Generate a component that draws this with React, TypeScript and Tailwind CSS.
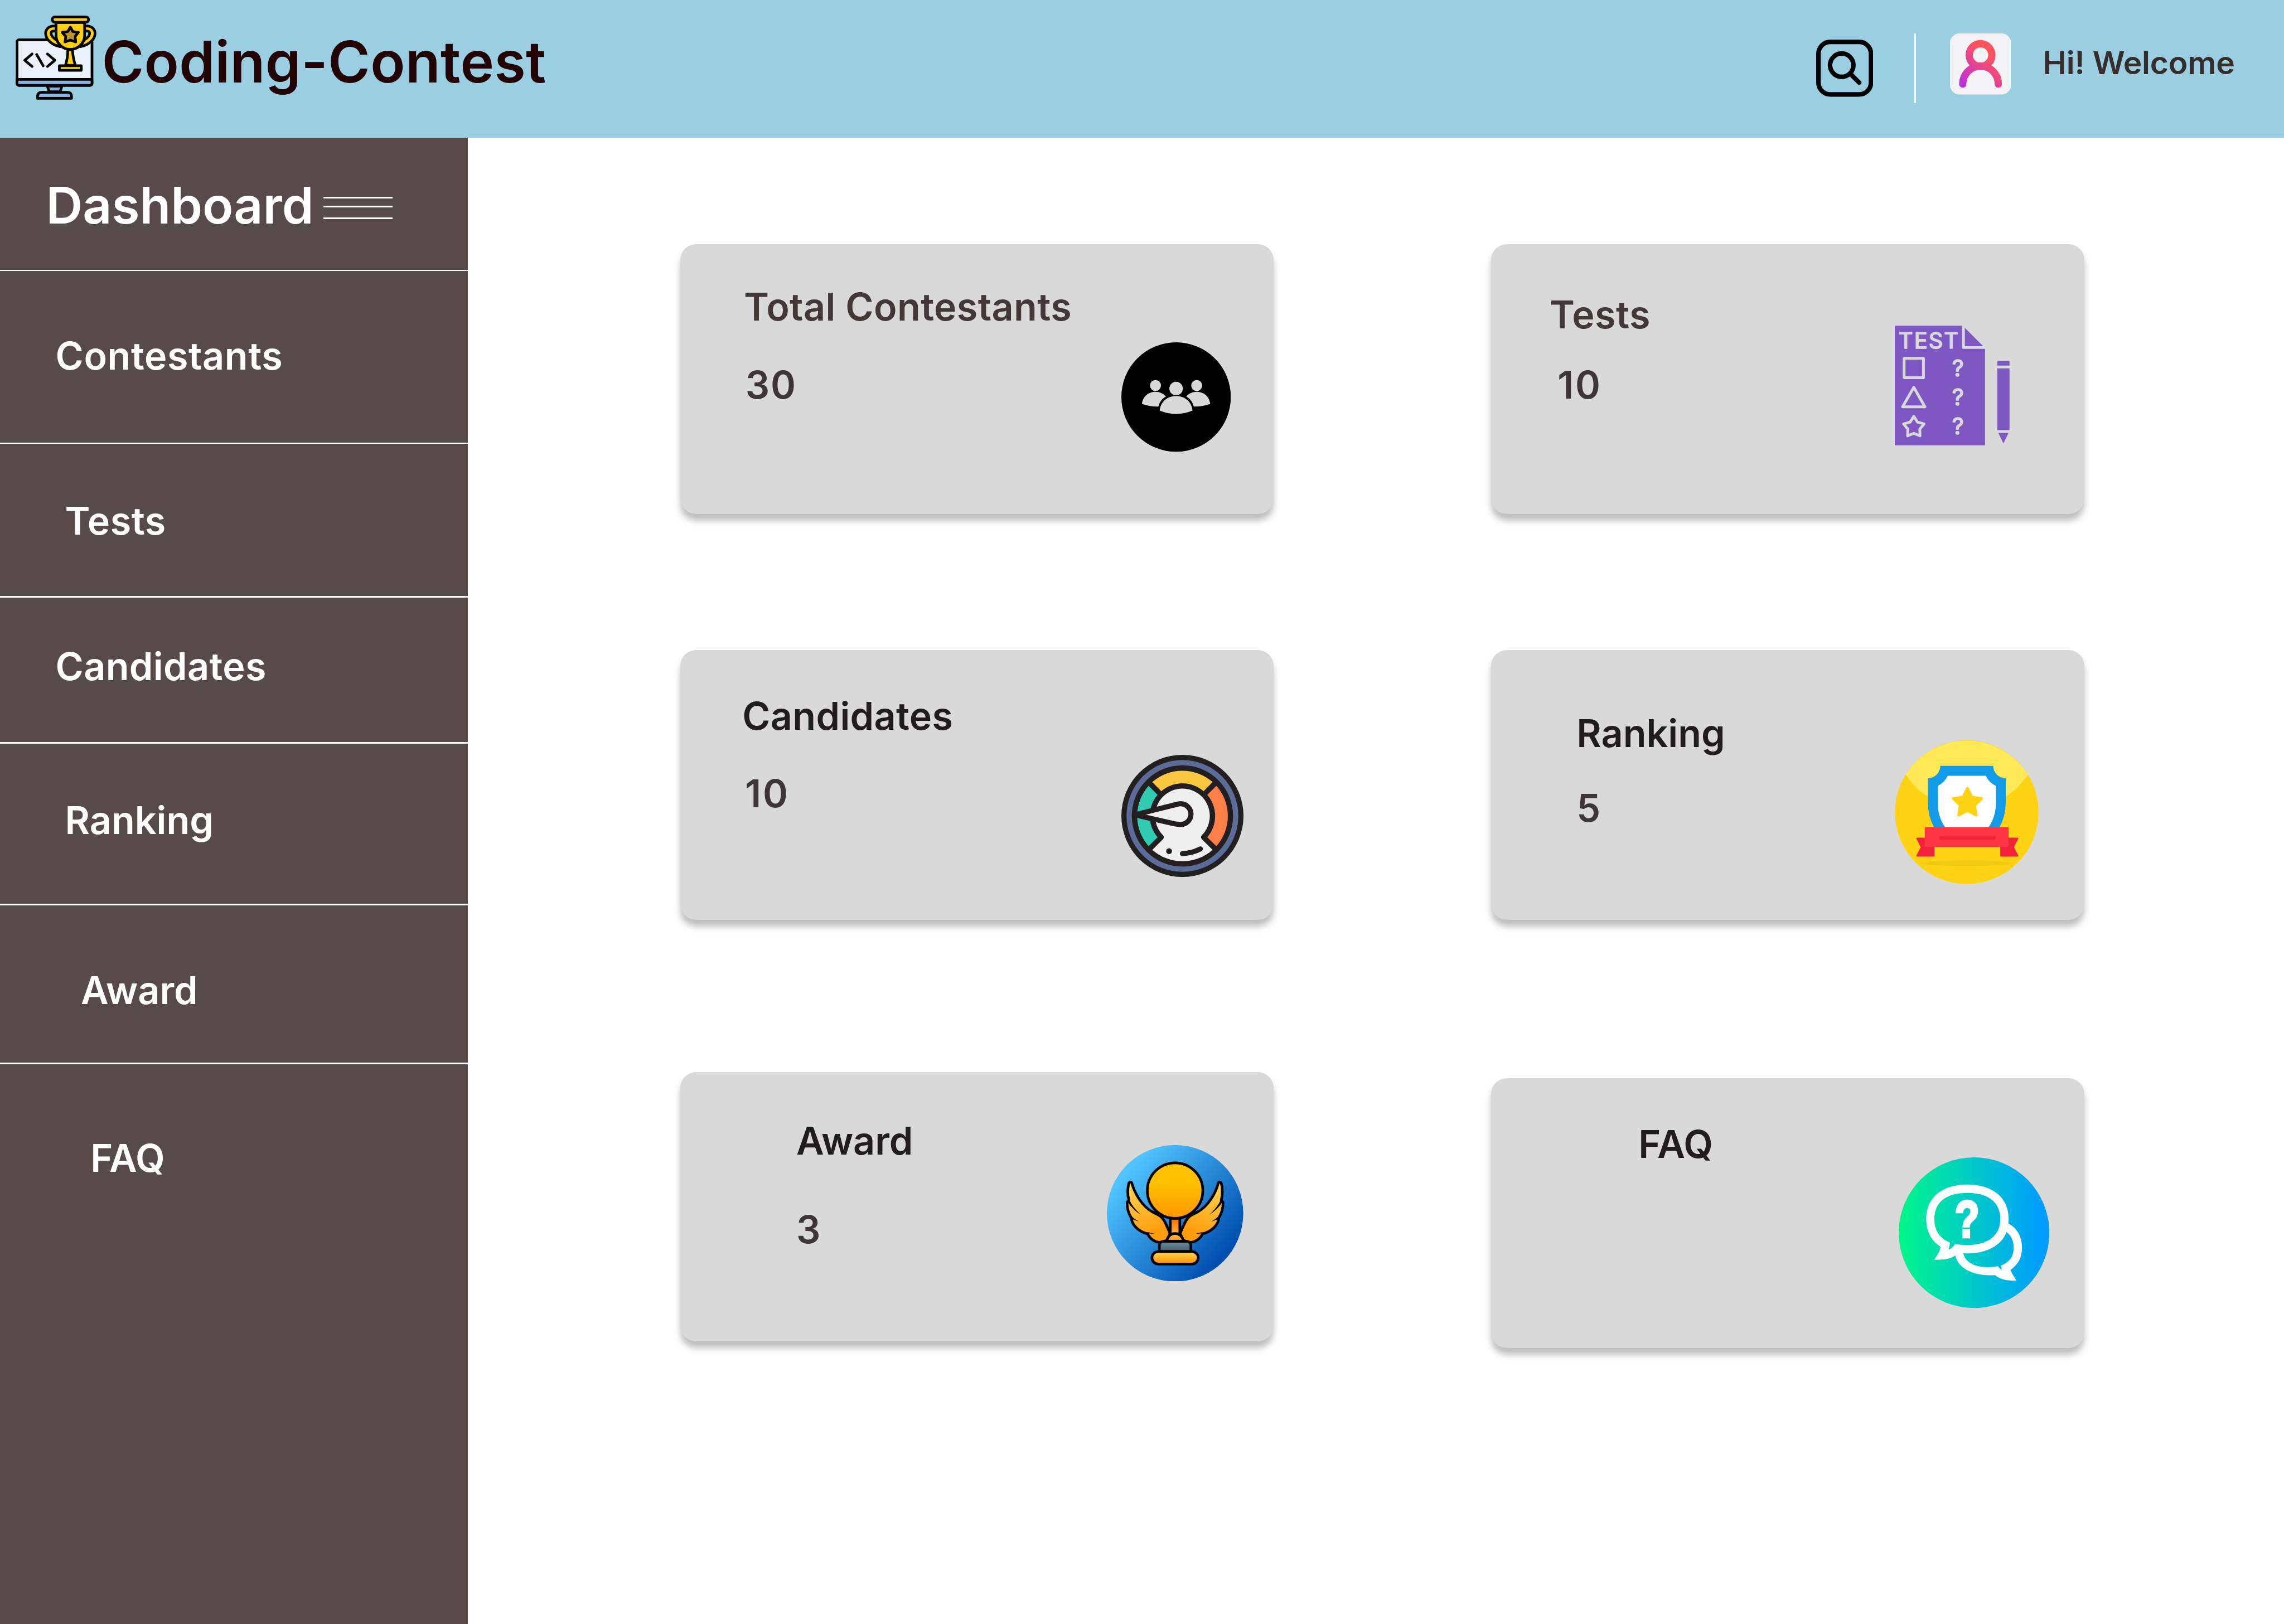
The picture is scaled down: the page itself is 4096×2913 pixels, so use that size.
import type { ReactNode } from "react";

function LogoIcon() {
  return (
    <svg viewBox="60 60 612 636" className="h-53 w-51 shrink-0" stroke="#000" strokeWidth="20" strokeLinejoin="round" strokeLinecap="round" fill="none">
      <path d="M300 594 L314 636 H397 L410 594Z" fill="#8ab0df" />
      <path d="M226 686V672Q226 641 257 641H453Q483 641 483 672V686Z" fill="#8ab0df" />
      <rect x="71" y="243" width="567" height="345" rx="15" fill="#eaf1fb" />
      <path d="M71 543H638V573Q638 588 623 588H86Q71 588 71 573Z" fill="#8ab0df" />
      <path d="M185 350 129 398 185 445M219 354 269 440M301 350 357 398 301 445" />
      <path d="M366 139H352C308 139 287 165 287 195C287 240 335 284 397 295L372 246C343 228 328 208 328 195C328 184 335 177 350 177H366Z" fill="#ffcf08" />
      <path d="M582 139H596C640 139 661 165 661 195C661 240 613 284 551 295L576 246C605 228 620 208 620 195C620 184 613 177 598 177H582Z" fill="#ffcf08" />
      <path d="M455 318C455 360 450 396 437 436H512C499 396 492 360 490 318Z" fill="#ffcf08" />
      <rect x="391" y="439" width="166" height="35" rx="2" fill="#ffcf08" />
      <path d="M366 112V210C366 268 415 316 474 316C533 316 582 268 582 210V112Z" fill="#ffcf08" />
      <rect x="337" y="70" width="275" height="40" rx="20" fill="#ffcf08" />
      <path d="M474 147 493 181 535 187 510 218 515 259 474 245 434 259 439 218 413 187 455 181Z" fill="#bd9730" />
    </svg>
  );
}

function SearchIcon() {
  return (
    <svg viewBox="0 0 144 144" className="h-36 w-36 shrink-0" fill="none" stroke="#000" strokeWidth="11.5" strokeLinecap="round">
      <rect x="5.75" y="5.75" width="132.5" height="132.5" rx="30" />
      <circle cx="64.5" cy="64.5" r="29.5" />
      <path d="M87 87 108.5 108.5" />
    </svg>
  );
}

function AvatarIcon() {
  return (
    <svg viewBox="0 0 154 154" className="h-38.5 w-38.5 shrink-0">
      <defs>
        <linearGradient id="avatar" gradientUnits="userSpaceOnUse" x1="96" y1="50" x2="30" y2="128">
          <stop offset="0" stopColor="#ff535c" />
          <stop offset="1" stopColor="#bd30dc" />
        </linearGradient>
      </defs>
      <rect width="154" height="154" rx="24" fill="#f3f3f6" />
      <g fill="none" stroke="url(#avatar)" strokeWidth="18.4" strokeLinecap="round">
        <circle cx="77" cy="54.5" r="28.6" />
        <path d="M32.2 127.7A44.8 45.6 0 0 1 121.8 127.7" />
      </g>
    </svg>
  );
}

function PeopleIcon() {
  return (
    <svg viewBox="144 132 828 828" className="h-69 w-69">
      <circle cx="558" cy="546" r="414" />
      <g fill="#d9d9d9">
        <circle cx="402" cy="459" r="41.5" />
        <circle cx="714" cy="459" r="41.5" />
        <circle cx="558" cy="482" r="51" />
        <path d="M300 598C304 545 347 506 402 506C433 506 461 518 481 542C452 558 432 585 424 618C378 619 338 612 300 598Z" />
        <path d="M816 598C812 545 769 506 714 506C683 506 655 518 635 542C664 558 684 585 692 618C738 619 778 612 816 598Z" />
        <path d="M434 649C438 585 492 538 558 538C624 538 678 585 682 649C605 682 511 682 434 649Z" />
      </g>
    </svg>
  );
}

function TestIcon() {
  return (
    <svg viewBox="178 123 870 905" className="h-75.5 w-72.5">
      <path d="M178 124H687V288Q687 299 698 299H861V1028H178ZM708 139 847 279H708Z" fill="#7e57c2" />
      <path d="M954 425V400Q954 388 966 388H1034Q1046 388 1046 400V425ZM954 446H1046V914H954ZM961 935H1039L1000 1014Z" fill="#7e57c2" />
      <g fill="#d9d9d9" stroke="#d9d9d9" strokeWidth="7" strokeLinejoin="round" fontFamily="Inter, sans-serif">
        <text x="207" y="296" fontSize="168" textLength="452">TEST</text>
        <text x="655" y="507" fontSize="172" textAnchor="middle">?</text>
        <text x="655" y="727" fontSize="172" textAnchor="middle">?</text>
        <text x="655" y="947" fontSize="172" textAnchor="middle">?</text>
      </g>
      <g fill="none" stroke="#d9d9d9" strokeWidth="21" strokeLinejoin="round">
        <path d="M248.500 370.500H395V517H248.500ZM322 590 406 737H237ZM322 810 350 853 399 867 367 906 369 957 322 938 275 957 277 906 245 867 294 853Z" />
      </g>
    </svg>
  );
}

function GaugeIcon() {
  return (
    <svg viewBox="144 132 924 924" className="h-77 w-77">
      <circle cx="606" cy="594" r="462" fill="#231f20" />
      <circle cx="606" cy="594" r="403" fill="none" stroke="#5c6c98" strokeWidth="40" />
      <path d="M378 338A345 345 0 0 1 834 338L766 407A245 245 0 0 0 446 407Z" fill="#fcc740" />
      <path d="M350 366A345 345 0 0 0 350 823L418 755A245 245 0 0 1 418 435Z" fill="#31cab3" />
      <path d="M863 366A345 345 0 0 1 863 823L794 755A245 245 0 0 0 794 435Z" fill="#ff7f48" />
      <path d="M378 851A345 345 0 0 0 834 851L753 770Q740 754 753 740A207 207 0 1 0 459 740Q472 754 459 770Z" fill="#efefef" />
      <path d="M245 586 555 509Q580 502 592 502A78.500 78.500 0 0 1 592 659Q580 659 548 654Z" fill="#efefef" stroke="#231f20" strokeWidth="39" strokeLinejoin="round" />
      <circle cx="505" cy="861" r="22" fill="#231f20" />
      <path d="M606 879Q680 877 741 844" fill="none" stroke="#231f20" strokeWidth="39" strokeLinecap="round" />
    </svg>
  );
}

function RankingIcon() {
  return (
    <svg viewBox="115 85 1090 1090" className="h-90.75 w-90.75">
      <circle cx="660" cy="629" r="544" fill="#ffd213" />
      <path d="M198 344A544 544 0 0 1 1122 344A546 546 0 0 1 198 344Z" fill="#ffe957" />
      <path d="M460 278H860A95 95 0 0 0 955 372V560Q955 660 907 745H413Q366 660 366 560V372A95 95 0 0 0 460 278Z" fill="#129be8" />
      <path d="M516 353H804Q828 405 881 430V555Q881 665 824 745H497Q440 665 440 555V430Q492 405 516 353Z" fill="#fff" />
      <path d="M665 446 699 513 774 525 721 577 733 653 665 619 597 653 609 577 556 525 631 513Z" fill="#ffd213" stroke="#ffd213" strokeWidth="18" strokeLinejoin="round" />
      <g fill="#f12239" stroke="#f12239" strokeWidth="10" strokeLinejoin="round">
        <path d="M283 827H410V960H283L317 893Z" />
        <path d="M1046 827H918V960H1046L1012 893Z" />
      </g>
      <rect x="342" y="742" width="635" height="151" rx="7" fill="#ff3545" />
      <rect x="449" y="810" width="432" height="28" rx="14" fill="#f12239" />
      <ellipse cx="660" cy="1015" rx="352" ry="21" fill="#f3c812" />
    </svg>
  );
}

function Wing() {
  return (
    <>
      <path
        d="M284 368C310 460 365 545 440 588C485 612 502 612 530 655C545 685 560 715 574 752L549 805L495 820C455 815 420 790 405 755C340 740 285 690 281 634C260 600 248 560 249 516L263 500C250 460 252 405 263 369Q274 356 284 368Z"
        fill="url(#wing)"
        stroke="#000"
        strokeWidth="20"
        strokeLinejoin="round"
      />
      <path d="M250 508Q290 572 352 608Q296 562 266 498ZM276 634Q300 652 337 662Q304 642 284 622ZM395 745Q430 757 457 751Q428 749 410 742Z" />
    </>
  );
}

function AwardIcon() {
  return (
    <svg viewBox="96 83 1032 1032" className="h-86 w-86">
      <defs>
        <linearGradient id="awardBg" gradientUnits="userSpaceOnUse" x1="230" y1="310" x2="960" y2="940">
          <stop offset="0" stopColor="#50c4ff" />
          <stop offset="1" stopColor="#004fb0" />
        </linearGradient>
        <linearGradient id="ball" x1="0" y1="0" x2="0" y2="1">
          <stop offset="0.35" stopColor="#ffc000" />
          <stop offset="1" stopColor="#ff9800" />
        </linearGradient>
        <linearGradient id="gold" x1="0" y1="0" x2="0" y2="1">
          <stop offset="0.1" stopColor="#ffce4c" />
          <stop offset="0.9" stopColor="#ff9908" />
        </linearGradient>
        <linearGradient id="post" x1="0" y1="0" x2="0" y2="1">
          <stop offset="0.1" stopColor="#ff7208" />
          <stop offset="1" stopColor="#ffb940" />
        </linearGradient>
        <linearGradient id="dome" x1="0" y1="0" x2="0" y2="1">
          <stop offset="0.1" stopColor="#ffc44a" />
          <stop offset="1" stopColor="#ff8420" />
        </linearGradient>
        <linearGradient id="steel" x1="0" y1="0" x2="0" y2="1">
          <stop offset="0" stopColor="#6c8d9b" />
          <stop offset="1" stopColor="#456472" />
        </linearGradient>
        <linearGradient id="wing" gradientUnits="userSpaceOnUse" x1="290" y1="380" x2="480" y2="740">
          <stop offset="0" stopColor="#ffd250" />
          <stop offset="1" stopColor="#ff9d0c" />
        </linearGradient>
      </defs>
      <circle cx="612" cy="599" r="516" fill="url(#awardBg)" />
      <Wing />
      <g transform="translate(1224 0) scale(-1 1)">
        <Wing />
      </g>
      <g stroke="#000" strokeWidth="20" strokeLinejoin="round">
        <rect x="576" y="636" width="72" height="125" fill="url(#post)" />
        <path d="M547 811C556 775 580 752 612 752C644 752 668 775 677 811Z" fill="url(#dome)" />
        <circle cx="612" cy="427" r="210" fill="url(#ball)" />
        <path d="M493 888V846Q493 811 528 811H697Q732 811 732 846V888Z" fill="url(#steel)" />
        <rect x="437" y="888" width="350" height="95" rx="47.5" fill="url(#gold)" />
      </g>
    </svg>
  );
}

function FaqIcon() {
  return (
    <svg viewBox="144 120 1140 1140" className="h-95 w-95">
      <defs>
        <linearGradient id="faq" x1="0" y1="0" x2="1" y2="0">
          <stop offset="0.03" stopColor="#00f58c" />
          <stop offset="0.5" stopColor="#00c9c9" />
          <stop offset="0.96" stopColor="#009cff" />
        </linearGradient>
      </defs>
      <circle cx="714" cy="690" r="570" fill="url(#faq)" />
      <path
        fill="#fff"
        fillRule="evenodd"
        d="M664 326C855 326 976 425 976 585L974 620C1040 655 1077 720 1077 805C1077 880 1045 935 990 971C1000 1000 1015 1020 1036 1052C965 1054 918 1047 873 1011C710 1022 592 960 573 863C530 890 500 896 412 895C440 855 455 830 461 797C390 750 352 680 352 585C352 425 470 326 664 326ZM664 389C502 389 414 460 414 585C414 672 450 730 533 765L522 819C545 808 555 797 572 775C600 780 630 783 664 783C822 783 913 710 913 585C913 460 822 389 664 389ZM633 846C800 855 920 790 960 685C995 712 1014 750 1014 805C1014 870 985 912 917 939L924 972C912 962 905 955 894 944C760 968 650 930 633 846Z"
      />
      <g transform="translate(661 725) scale(0.78 1)">
        <text x="0" y="0" fontSize="388" fontWeight="700" fontFamily="'Liberation Sans', sans-serif" textAnchor="middle" fill="#fff" stroke="#fff" strokeWidth="20">
          ?
        </text>
      </g>
    </svg>
  );
}

const cardText = "font-semibold text-[68.27px] leading-[1.21] whitespace-nowrap";

type CardProps = {
  title: string;
  value?: string;
  titleClass: string;
  valueClass?: string;
  textClass: string;
  iconClass: string;
  className?: string;
  icon: ReactNode;
};

function Card({ title, value, titleClass, valueClass, textClass, iconClass, className, icon }: CardProps) {
  return (
    <section className={`flex h-170 w-374 items-start rounded-[28.44px] bg-[#d9d9d9] shadow-[0_11.38px_11.38px_rgba(0,0,0,0.25)] ${className ?? ""}`}>
      <div className={`flex shrink-0 flex-col ${textClass}`}>
        <h2 className={`${cardText} ${titleClass}`}>{title}</h2>
        {value && <p className={`${cardText} text-[#3e3636] ${valueClass}`}>{value}</p>}
      </div>
      <div className={`shrink-0 ${iconClass}`}>{icon}</div>
    </section>
  );
}

const navItems = [
  { label: "Contestants", className: "h-108 pl-35 pt-39 tracking-[0.6px]" },
  { label: "Tests", className: "h-96 pl-41 pt-34 tracking-[0.5px]" },
  { label: "Candidates", className: "h-91 pl-35 pt-28.75 tracking-[0.35px]" },
  { label: "Ranking", className: "h-101 pl-41 pt-33.75" },
  { label: "Award", className: "h-99 pl-51 pt-39" },
  { label: "FAQ", className: "pl-57 pt-44.75" },
];

export default function App() {
  return (
    <div className="flex h-[2913px] w-[4096px] flex-col overflow-hidden bg-white font-['Inter',sans-serif] [--spacing:2.84444px]">
      <header className="flex h-87 shrink-0 items-start bg-[#9acee0]">
        <div className="flex items-start pl-10 pt-10">
          <LogoIcon />
          <h1 className="ml-3.25 mt-7.75 text-[102.4px] leading-[1.21] font-semibold tracking-[0.4px] whitespace-nowrap text-[#220305]">Coding-Contest</h1>
        </div>
        <div className="ml-auto flex w-295 items-start">
          <div className="mt-25">
            <SearchIcon />
          </div>
          <div className="mt-21 ml-26 h-44 w-1 bg-white" />
          <div className="mt-21.25 ml-21.25">
            <AvatarIcon />
          </div>
          <span className="mt-27.75 ml-20.25 text-[56.89px] leading-[1.21] font-semibold tracking-[-0.2px] whitespace-nowrap text-[#332d2d]">Hi! Welcome</span>
        </div>
      </header>
      <div className="flex grow">
        <aside className="flex w-295 shrink-0 flex-col bg-[#564a4a] text-white">
          <div className="flex h-83 shrink-0 items-start pl-29">
            <span className="mt-23 w-175 text-[91.02px] leading-[1.21] font-semibold">Dashboard</span>
            <div className="mt-37 flex w-43.5 flex-col">
              <div className="h-[3px] bg-white" />
              <div className="mt-4.75 h-[3px] bg-white" />
              <div className="mt-6.25 h-[3px] bg-white" />
            </div>
          </div>
          <nav>
            {navItems.map((item) => (
              <div key={item.label}>
                <div className="h-1 bg-white" />
                <a className={`block text-[68.27px] leading-[1.21] font-semibold ${item.className}`}>{item.label}</a>
              </div>
            ))}
          </nav>
        </aside>
        <main className="flex gap-137 pt-67 pl-134">
          <div className="flex flex-col">
            <Card title="Total Contestants" value="30" titleClass="ml-40 mt-25 text-[#423838] tracking-[0.4px]" valueClass="ml-41 mt-20 tracking-[1.6px]" textClass="w-278" iconClass="mt-62" icon={<PeopleIcon />} />
            <Card title="Candidates" value="10" titleClass="ml-39 mt-27 text-[#211d1d] tracking-[0.35px]" valueClass="ml-40.75 mt-20 tracking-[3px]" textClass="w-278" iconClass="mt-66" className="mt-86" icon={<GaugeIcon />} />
            <Card title="Award" value="3" titleClass="ml-73 mt-29 text-[#211d1d]" valueClass="ml-73 mt-26.75" textClass="w-269" iconClass="mt-46" className="mt-96" icon={<AwardIcon />} />
          </div>
          <div className="flex flex-col">
            <Card title="Tests" value="10" titleClass="ml-37 mt-30 text-[#423838] tracking-[0.5px]" valueClass="ml-42 mt-15 tracking-[3px]" textClass="w-254.75" iconClass="mt-51.25" icon={<TestIcon />} />
            <Card title="Ranking" value="5" titleClass="ml-54 mt-38 text-[#211d1d]" valueClass="ml-54 mt-18" textClass="w-254.5" iconClass="mt-57" className="mt-86" icon={<RankingIcon />} />
            <Card title="FAQ" titleClass="ml-93 mt-27 text-[#211d1d]" textClass="w-257" iconClass="mt-50" className="mt-100" icon={<FaqIcon />} />
          </div>
        </main>
      </div>
    </div>
  );
}
